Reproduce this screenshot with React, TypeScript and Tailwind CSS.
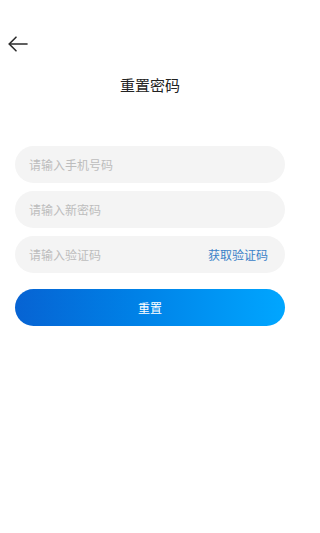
import React from "react";

export default function App() {
  const font = { fontFamily: '"Noto Sans CJK SC", "Noto Sans", sans-serif' };
  return (
    <div className="w-[300px] h-[533px] bg-white flex flex-col" style={font}>
      <div className="h-[30px]" />
      <div className="h-[28px] flex items-center pl-[8px]">
        <svg width="20" height="16" viewBox="0 0 20 16" fill="none" stroke="#2b2b2b" strokeWidth="1.6" strokeLinecap="round" strokeLinejoin="round">
          <path d="M19 8H1.5" />
          <path d="M8 1.2L1.2 8L8 14.8" />
        </svg>
      </div>
      <div className="h-[26px] flex items-center justify-center mt-[14px] text-[15px] text-[#222]">
        重置密码
      </div>
      <div className="flex flex-col gap-[8px] px-[15px] mt-[48px]">
        <div className="h-[37px] rounded-full bg-[#f4f4f4] flex items-center pl-[14px] text-[12px] text-[#bdbdbd]">
          请输入手机号码
        </div>
        <div className="h-[37px] rounded-full bg-[#f4f4f4] flex items-center pl-[14px] text-[12px] text-[#bdbdbd]">
          请输入新密码
        </div>
        <div className="h-[37px] rounded-full bg-[#f4f4f4] flex items-center justify-between pl-[14px] pr-[17px] text-[12px]">
          <span className="text-[#bdbdbd]">请输入验证码</span>
          <span className="text-[#3b82c8]">获取验证码</span>
        </div>
      </div>
      <div className="px-[15px] mt-[16px]">
        <div className="h-[37px] rounded-full bg-gradient-to-r from-[#0763d3] to-[#00a6ff] flex items-center justify-center text-white text-[12px]">
          重置
        </div>
      </div>
    </div>
  );
}
